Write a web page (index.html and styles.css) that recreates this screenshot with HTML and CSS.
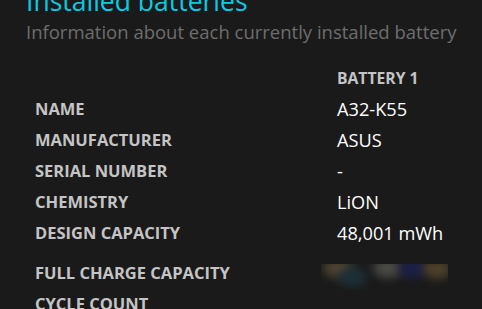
FILE: index.html
```html
<!DOCTYPE html>
<html>
<head>
<meta charset="utf-8">
<link rel="stylesheet" href="styles.css">
</head>
<body>
<div class="page">
  <h1 class="title">Installed batteries</h1>
  <p class="subtitle">Information about each currently installed battery</p>
  <div class="table">
    <div class="label"></div><div class="head">BATTERY 1</div>
    <div class="label">NAME</div><div class="value">A32-K55</div>
    <div class="label">MANUFACTURER</div><div class="value">ASUS</div>
    <div class="label">SERIAL NUMBER</div><div class="value">-</div>
    <div class="label">CHEMISTRY</div><div class="value">LiON</div>
    <div class="label">DESIGN CAPACITY</div><div class="value">48,001 mWh</div>
    <div class="label tall">FULL CHARGE CAPACITY</div>
    <div class="value tall">
      <div class="redact">
        <span class="blob b1"></span><span class="blob b2"></span><span class="blob b3"></span><span class="blob b4"></span><span class="blob b5"></span>
      </div>
    </div>
    <div class="label">CYCLE COUNT</div><div class="value"></div>
  </div>
</div>
</body>
</html>
```
FILE: styles.css
```css
html, body {
  margin: 0;
  padding: 0;
  background: #1a1a1a;
  overflow: hidden;
}
.page {
  padding: 0 0 0 26px;
  font-family: "Open Sans", "Noto Sans", sans-serif;
  margin-top: -19px;
}
.title {
  margin: 0;
  font-size: 26.5px;
  font-weight: 400;
  color: #08cce4;
  line-height: 40px;
}
.subtitle {
  margin: 0;
  font-size: 18.5px;
  line-height: 24px;
  color: #6e6e6e;
  margin-top: -1px;
}
.table {
  margin: 18px 0 0 9px;
  display: grid;
  grid-template-columns: 302px 1fr;
  grid-template-rows: repeat(6, 31px) 40px 31px;
  align-items: center;
}
.label {
  font-size: 16.5px;
  font-weight: 700;
  color: #c4c4c4;
  white-space: nowrap;
}
.head {
  font-size: 15.7px;
  font-weight: 700;
  color: #c4c4c4;
}
.value {
  font-size: 18.2px;
  color: #ffffff;
}
.tall {
  align-self: stretch;
  box-sizing: border-box;
  padding-top: 9px;
  display: flex;
  align-items: center;
}
.value.tall { align-items: flex-start; }
.redact {
  position: relative;
  width: 127px;
  height: 26px;
  margin: 7px 0 0 -16px;
  overflow: hidden;
}
.blob {
  position: absolute;
  border-radius: 50%;
  filter: blur(5px);
}
.b1 { left: 2px; top: -6px; width: 30px; height: 20px; background: #4e4432; }
.b2 { left: 18px; top: 3px; width: 28px; height: 20px; background: #1c3038; }
.b3 { left: 52px; top: -6px; width: 30px; height: 20px; background: #4a4a46; }
.b4 { left: 78px; top: -6px; width: 28px; height: 20px; background: #1c2048; }
.b5 { left: 102px; top: -5px; width: 28px; height: 20px; background: #4e412c; }
```
